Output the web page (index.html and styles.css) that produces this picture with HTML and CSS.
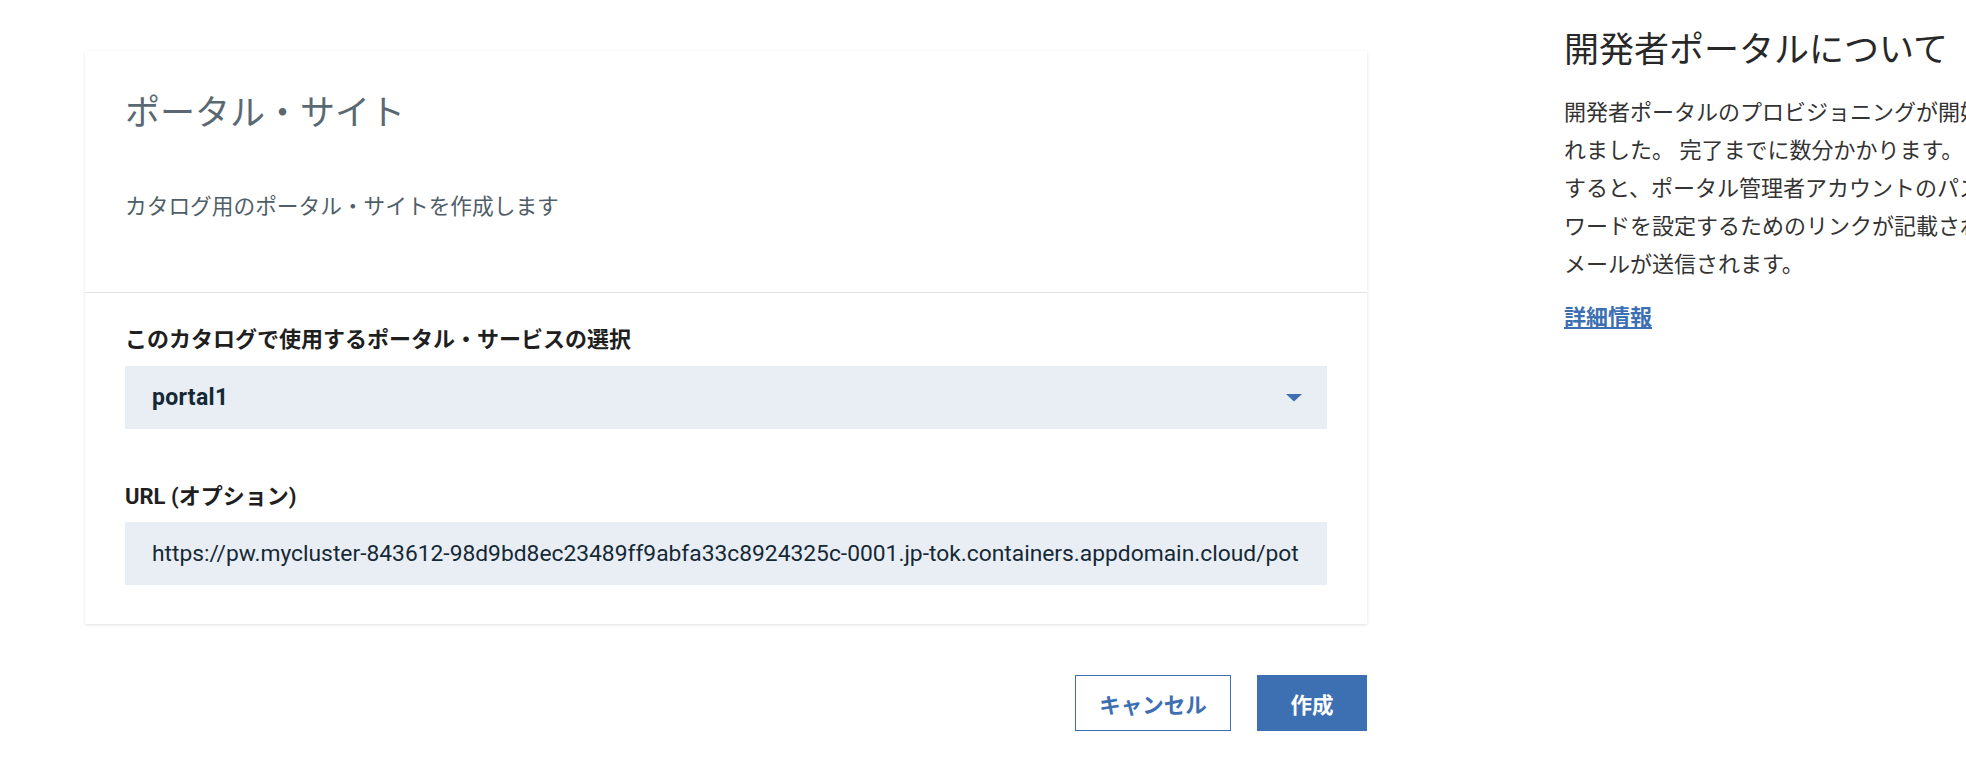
FILE: index.html
```html
<!DOCTYPE html>
<html lang="ja">
<head>
<meta charset="utf-8">
<title>ポータル・サイト</title>
<link rel="stylesheet" href="styles.css">
</head>
<body>
<div class="page">
  <main class="main">
    <section class="card">
      <header class="card-header">
        <h1 class="card-title">ポータル・サイト</h1>
        <p class="card-desc">カタログ用のポータル・サイトを作成します</p>
      </header>
      <div class="card-body">
        <div class="field">
          <label class="field-label">このカタログで使用するポータル・サービスの選択</label>
          <div class="select">
            <span class="select-value">portal1</span>
            <svg class="select-arrow" width="16" height="8" viewBox="0 0 16 8"><polygon points="0,0 16,0 8,7.5"/></svg>
          </div>
        </div>
        <div class="field field-gap">
          <label class="field-label">URL (オプション)</label>
          <div class="input">https://pw.mycluster-843612-98d9bd8ec23489ff9abfa33c8924325c-0001.jp-tok.containers.appdomain.cloud/pot</div>
        </div>
      </div>
    </section>
    <div class="actions">
      <button class="btn btn-secondary">キャンセル</button>
      <button class="btn btn-primary">作成</button>
    </div>
  </main>
  <aside class="about">
    <h2 class="about-title">開発者ポータルについて</h2>
    <p class="about-text">開発者ポータルのプロビジョニングが開始されました。 完了までに数分かかります。 完了すると、ポータル管理者アカウントのパスワードを設定するためのリンクが記載されたメールが送信されます。</p>
    <a class="about-link" href="#">詳細情報</a>
  </aside>
</div>
</body>
</html>
```

FILE: styles.css
```css
html, body {
  margin: 0;
  padding: 0;
  overflow: hidden;
  background: #ffffff;
}

body {
  font-family: Roboto, "Noto Sans CJK JP", sans-serif;
  color: #152935;
}

.page {
  display: flex;
  align-items: flex-start;
  padding-left: 85px;
  gap: 197px;
  width: max-content;
}

.main {
  width: 1282px;
  flex-shrink: 0;
  padding-top: 51px;
}

.card {
  background: #ffffff;
  box-shadow: 0 1px 3px rgba(0, 0, 0, 0.12);
}

.card-header {
  padding: 41px 40px 69px;
  border-bottom: 1px solid #e0e4e8;
}

.card-title {
  margin: 0;
  font-size: 35px;
  line-height: 44px;
  font-weight: 400;
  color: #5a6872;
}

.card-desc {
  margin: 55px 0 0;
  font-size: 21.7px;
  line-height: 32px;
  color: #4f5e68;
}

.card-body {
  padding: 32px 40px 39px;
}

.field-label {
  display: block;
  font-size: 22px;
  line-height: 30px;
  font-weight: 700;
  color: #1f1f1f;
}

.field-gap {
  margin-top: 53px;
}

.select {
  margin-top: 11px;
  height: 63px;
  background: #e9eef5;
  display: flex;
  align-items: center;
  justify-content: space-between;
  padding: 0 25px 0 27px;
}

.select-value {
  font-size: 23px;
  letter-spacing: 0.3px;
  font-weight: 700;
  color: #152935;
}

.select-arrow {
  fill: #3d70b2;
}

.input {
  margin-top: 10px;
  height: 63px;
  background: #e9eef5;
  display: flex;
  align-items: center;
  padding: 0 18px 0 27px;
  font-size: 22.8px;
  color: #152935;
  white-space: nowrap;
  overflow: hidden;
}

.actions {
  display: flex;
  justify-content: flex-end;
  gap: 26px;
  margin-top: 51px;
}

.btn {
  box-sizing: border-box;
  height: 56px;
  font-family: "Noto Sans CJK JP", sans-serif;
  font-size: 21.5px;
  font-weight: 700;
  border: 1px solid #3d70b2;
  padding: 0;
  cursor: pointer;
}

.btn-secondary {
  width: 156px;
  background: #ffffff;
  color: #3d70b2;
}

.btn-primary {
  width: 110px;
  background: #3d70b2;
  color: #ffffff;
}

.about {
  width: 456px;
  flex-shrink: 0;
  margin-top: 29px;
}

.about-title {
  margin: 0;
  font-size: 35px;
  line-height: 44px;
  font-weight: 400;
  color: #282828;
}

.about-text {
  margin: 21px 0 0;
  font-size: 22px;
  line-height: 38px;
  color: #333333;
  line-break: strict;
}

.about-link {
  display: inline-block;
  margin-top: 15px;
  font-size: 22px;
  line-height: 38px;
  font-weight: 700;
  color: #3d70b2;
  text-decoration: underline;
}
```
